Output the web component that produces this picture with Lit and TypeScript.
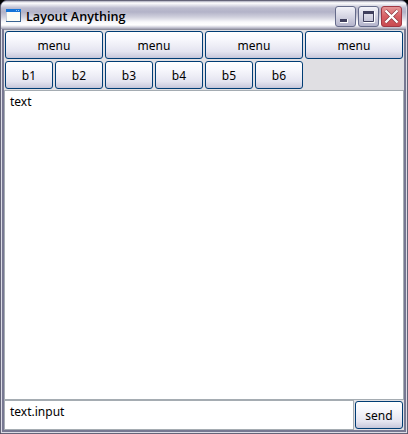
import { LitElement, html, css, svg } from "lit";
import { customElement } from "lit/decorators.js";

@customElement("app-root")
export class AppRoot extends LitElement {
  static styles = css`
    :host {
      display: block;
      width: 408px;
      height: 434px;
      background: #000;
      font: 12px "Noto Sans", "Open Sans", sans-serif;
      color: #000;
    }
    * { box-sizing: border-box; }
    .window {
      height: 434px;
      display: flex;
      flex-direction: column;
      border-radius: 7px 7px 0 0;
      overflow: hidden;
      background: #777892;
      border: 1px solid #646478;
      box-shadow: inset 0 0 0 1px #dcdce6;
    }
    .title {
      height: 28px;
      flex: none;
      display: flex;
      align-items: center;
      padding: 1px 4px 0 4px;
      margin: 0 1px 0 0;
      background: linear-gradient(#a9a9bb 0, #fff 2px, #e4e4ec 4px, #bcbccf 7px, #b3b3c8 11px, #d0d0dd 16px, #f8f8fb 21px, #fff 24px, #d4d4df 26px, #9c9cae 28px);
    }
    .title svg { display: block; flex: none; }
    .caption {
      flex: 1;
      margin-left: 4px;
      font: 600 12.6px/20px "Open Sans", "Noto Sans", sans-serif;
      padding-top: 3px;
    }
    .controls { display: flex; gap: 2px; padding-top: 2px; }
    .body {
      flex: 1;
      display: flex;
      flex-direction: column;
      margin: 0 3px 3px;
      border-top: 1px solid #8e8e9c;
      background: #e0dfe3;
    }
    .row { display: flex; height: 30px; flex: none; }
    .cell { padding: 1px 1px 0; }
    .row.menus .cell { flex: 1; }
    .row.small .cell { width: 50px; }
    .btn {
      display: block;
      width: 100%;
      height: 28px;
      padding: 0;
      border: 1px solid #003c74;
      border-radius: 3px;
      background: linear-gradient(#fff 0, #f7f7fc 30%, #e4e4f0 75%, #cecee0 94%, #c4c4d8);
      font: inherit;
      color: inherit;
    }
    .text {
      flex: 1;
      background: #fff;
      border: 1px solid #a5acb2;
      padding: 3px 5px;
      line-height: 16px;
    }
    .foot { display: flex; height: 30px; flex: none; }
    .input {
      flex: 1;
      background: #fff;
      border: 1px solid #a5acb2;
      padding: 3px 5px;
      line-height: 16px;
    }
    .send { width: 50px; }
  `;

  private control(kind: "min" | "max" | "close") {
    const red = kind === "close";
    return html`<svg width="21" height="21" viewBox="0 0 21 21">
      <defs>
        <linearGradient id="face-${kind}" x1="0" y1="0" x2="0" y2="1">
          <stop offset="0" stop-color=${red ? "#e59a9a" : "#f4f4fa"} />
          <stop offset="0.5" stop-color=${red ? "#d85f64" : "#d5d5e3"} />
          <stop offset="1" stop-color=${red ? "#c84a50" : "#b2b2ca"} />
        </linearGradient>
      </defs>
      <rect x="0.5" y="0.5" width="20" height="20" rx="2.5" fill="url(#face-${kind})" stroke=${red ? "#a03844" : "#656b8a"} />
      ${kind === "min" ? svg`<path d="M5 16.5h8M12.5 13v4" stroke="#fff" /><rect x="5" y="13" width="7" height="3" fill="#3f3f5c" />` : null}
      ${kind === "max" ? svg`<path d="M5.5 16.5h11v-11" fill="none" stroke="#fff" /><path d="M5.500 6v9.500h10v-9.500" fill="none" stroke="#3f3f5c" /><rect x="5" y="5" width="11" height="3" fill="#3f3f5c" />` : null}
      ${red ? svg`<path d="M4.500 4.500l12 12M16.500 4.500L4.500 16.500" stroke="#873640" stroke-width="3.600" /><path d="M4.500 4.500l12 12M16.500 4.500L4.500 16.500" stroke="#fff" stroke-width="2.400" />` : null}
    </svg>`;
  }

  render() {
    return html`<div class="window">
      <div class="title">
        <svg width="17" height="16" viewBox="0 0 17 16">
          <rect x="1" y="2" width="15" height="12" fill="#fcfcf6" />
          <path d="M1.500 3v10.500" stroke="#c5ccd8" />
          <path d="M1 13.500h15M15.500 3v11" stroke="#3a6492" />
          <rect x="1" y="1" width="15" height="3" fill="#1674d8" />
          <path d="M11 2.500h1M13 2.500h1" stroke="#9ccaf4" />
        </svg>
        <div class="caption">Layout Anything</div>
        <div class="controls">${this.control("min")}${this.control("max")}${this.control("close")}</div>
      </div>
      <div class="body">
        <div class="row menus">
          ${[1, 2, 3, 4].map(() => html`<div class="cell"><button class="btn">menu</button></div>`)}
        </div>
        <div class="row small">
          ${[1, 2, 3, 4, 5, 6].map((n) => html`<div class="cell"><button class="btn">b${n}</button></div>`)}
        </div>
        <div class="text">text</div>
        <div class="foot">
          <div class="input">text.input</div>
          <div class="cell send"><button class="btn">send</button></div>
        </div>
      </div>
    </div>`;
  }
}
